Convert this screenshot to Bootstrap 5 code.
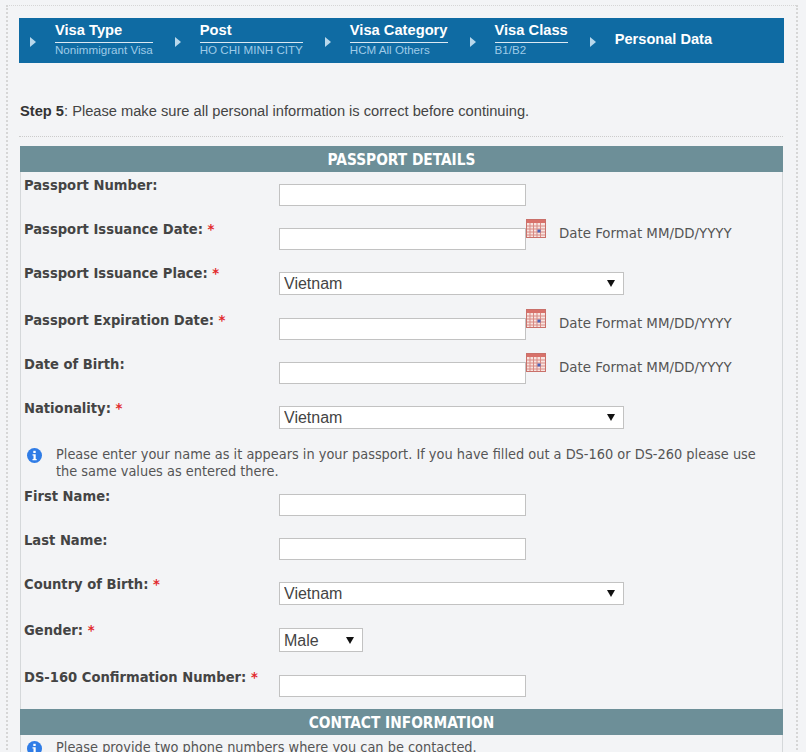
<!DOCTYPE html>
<html lang="en">
<head>
    <meta charset="UTF-8">
    <meta name="viewport" content="width=device-width, initial-scale=1.0">
    <title>Personal Data</title>
    <link href="https://cdn.jsdelivr.net/npm/bootstrap@5.3.0/dist/css/bootstrap.min.css" rel="stylesheet">
    <style>
        html, body {
            height: 752px;
            overflow: hidden;
        }
        body {
            background-color: #f3f4f6;
            font-family: "DejaVu Sans Condensed", "DejaVu Sans", sans-serif;
            font-size: 14.4px;
            color: #555;
        }

        /* frame */
        .page-frame {
            margin: 5px 8px 0 6px;
            padding: 12px 0 0 11px;
            border-top: 1px dotted #d6d6d6;
            border-left: 2px dotted #d6d6d6;
            border-right: 2px dotted #d6d6d6;
            height: 800px;
        }

        /* steps */
        .step-bar {
            width: 765px;
            height: 45px;
            background-color: #0f6ba3;
            font-family: "Liberation Sans", sans-serif;
            padding-left: 11px;
        }
        .step-arrow {
            width: 0;
            height: 0;
            border-top: 5.5px solid transparent;
            border-bottom: 5.5px solid transparent;
            border-left: 6px solid #b9d8ec;
            margin: 2px 19px 0 0;
        }
        .step-item {
            margin-right: 22px;
            padding-bottom: 4px;
        }
        .step-title {
            color: #fff;
            font-size: 14.7px;
            font-weight: 700;
            line-height: 17px;
            border-bottom: 1px solid #dbe9f3;
            padding-bottom: 3px;
        }
        .step-sub {
            color: #9fcbe8;
            font-size: 11.6px;
            line-height: 13px;
        }
        .step-now {
            color: #fff;
            font-size: 14.6px;
            font-weight: 700;
            margin-bottom: 2px;
        }

        .step-note {
            font-family: "Liberation Sans", sans-serif;
            font-size: 14.66px;
            color: #444;
            margin: 39px 0 16px 1px;
            line-height: 18px;
        }
        .step-note b {
            color: #333;
        }

        /* form panel */
        .form-panel {
            width: 764px;
            border-top: 1px dotted #ccc;
            padding-top: 9px;
        }
        .form-body {
            width: 763px;
            margin-left: 1px;
            border-left: 1px solid #d5d8da;
            border-right: 1px solid #d5d8da;
        }
        .panel-head {
            height: 26px;
            line-height: 28px;
            background-color: #6d8f98;
            color: #fff;
            font-size: 15.3px;
            font-weight: 700;
            text-align: center;
            margin: 0 -1px;
        }
        .field-row {
            height: 44px;
            padding-left: 3px;
        }
        .field-row.tall {
            height: 46px;
        }
        .field-row.tallest {
            height: 47px;
        }
        .field-label {
            width: 255px;
            flex: none;
            font-size: 14.6px;
            font-weight: 700;
            color: #444;
            line-height: 18px;
            padding-top: 5px;
        }
        .field-row.snug .field-label {
            padding-top: 4px;
        }
        .req {
            color: #e2292c;
        }
        .form-control.field-input, .form-select.field-input {
            height: 22px;
            min-height: 0;
            width: 247px;
            flex: none;
            padding: 0 5px;
            margin-top: 12px;
            border: 1px solid #c2c2c2;
            border-radius: 0;
            background-color: #fff;
            font-family: "Liberation Sans", sans-serif;
            font-size: 16px;
            color: #444;
            line-height: 21px;
        }
        .form-select.field-input {
            height: 23px;
            width: 345px;
            padding-left: 4px;
            background-image: url("data:image/svg+xml,%3csvg xmlns='http://www.w3.org/2000/svg' viewBox='0 0 8 7'%3e%3cpath d='M0 0h8L4 7z' fill='%23111'/%3e%3c/svg%3e");
            background-size: 8px 7px;
            background-position: right 8px center;
        }
        .form-select.field-input.short {
            width: 84px;
            height: 24px;
        }
        .cal-icon {
            width: 20px;
            height: 19px;
            flex: none;
            margin-top: 3px;
        }
        .date-hint {
            font-size: 14.85px;
            margin-left: 13px;
            margin-top: 8px;
            line-height: 18px;
        }
        .info-row {
            padding: 0 20px 0 6px;
            line-height: 17px;
        }
        .info-first {
            margin: 8px 0 2px;
        }
        .info-next {
            margin-top: 4px;
        }
        .info-icon {
            width: 15px;
            height: 15px;
            flex: none;
            margin: 2px 14px 0 0;
        }
    </style>
</head>
<body>

    <div class="page-frame">
        <div class="step-bar d-flex align-items-center">
            <span class="step-arrow"></span>
            <div class="step-item">
                <div class="step-title">Visa Type</div>
                <div class="step-sub">Nonimmigrant Visa</div>
            </div>
            <span class="step-arrow"></span>
            <div class="step-item">
                <div class="step-title">Post</div>
                <div class="step-sub">HO CHI MINH CITY</div>
            </div>
            <span class="step-arrow"></span>
            <div class="step-item">
                <div class="step-title">Visa Category</div>
                <div class="step-sub">HCM All Others</div>
            </div>
            <span class="step-arrow"></span>
            <div class="step-item">
                <div class="step-title">Visa Class</div>
                <div class="step-sub">B1/B2</div>
            </div>
            <span class="step-arrow"></span>
            <div class="step-now">Personal Data</div>
        </div>

        <p class="step-note"><b>Step 5</b>: Please make sure all personal information is correct before continuing.</p>

        <div class="form-panel">
            <div class="form-body">
                <div class="panel-head">PASSPORT DETAILS</div>

                <div class="field-row snug d-flex">
                    <label class="field-label">Passport Number:</label>
                    <input class="form-control field-input" type="text">
                </div>
                <div class="field-row snug d-flex">
                    <label class="field-label">Passport Issuance Date: <span class="req">*</span></label>
                    <input class="form-control field-input" type="text">
                    <svg class="cal-icon" viewBox="0 0 20 19"><use href="#cal"></use></svg>
                    <span class="date-hint">Date Format MM/DD/YYYY</span>
                </div>
                <div class="field-row snug tall d-flex">
                    <label class="field-label">Passport Issuance Place: <span class="req">*</span></label>
                    <select class="form-select field-input"><option>Vietnam</option></select>
                </div>
                <div class="field-row d-flex">
                    <label class="field-label">Passport Expiration Date: <span class="req">*</span></label>
                    <input class="form-control field-input" type="text">
                    <svg class="cal-icon" viewBox="0 0 20 19"><use href="#cal"></use></svg>
                    <span class="date-hint">Date Format MM/DD/YYYY</span>
                </div>
                <div class="field-row d-flex">
                    <label class="field-label">Date of Birth:</label>
                    <input class="form-control field-input" type="text">
                    <svg class="cal-icon" viewBox="0 0 20 19"><use href="#cal"></use></svg>
                    <span class="date-hint">Date Format MM/DD/YYYY</span>
                </div>
                <div class="field-row d-flex">
                    <label class="field-label">Nationality: <span class="req">*</span></label>
                    <select class="form-select field-input"><option>Vietnam</option></select>
                </div>

                <div class="info-row info-first d-flex">
                    <svg class="info-icon" viewBox="0 0 15 15"><use href="#info"></use></svg>
                    <div>Please enter your name as it appears in your passport. If you have filled out a DS-160 or DS-260 please use the same values as entered there.</div>
                </div>

                <div class="field-row d-flex">
                    <label class="field-label">First Name:</label>
                    <input class="form-control field-input" type="text">
                </div>
                <div class="field-row d-flex">
                    <label class="field-label">Last Name:</label>
                    <input class="form-control field-input" type="text">
                </div>
                <div class="field-row tall d-flex">
                    <label class="field-label">Country of Birth: <span class="req">*</span></label>
                    <select class="form-select field-input"><option>Vietnam</option></select>
                </div>
                <div class="field-row tallest d-flex">
                    <label class="field-label">Gender: <span class="req">*</span></label>
                    <select class="form-select field-input short"><option>Male</option></select>
                </div>
                <div class="field-row tall d-flex">
                    <label class="field-label">DS-160 Confirmation Number: <span class="req">*</span></label>
                    <input class="form-control field-input" type="text">
                </div>

                <div class="panel-head">CONTACT INFORMATION</div>
                <div class="info-row info-next d-flex">
                    <svg class="info-icon" viewBox="0 0 15 15"><use href="#info"></use></svg>
                    <div>Please provide two phone numbers where you can be contacted.</div>
                </div>
            </div>
        </div>
    </div>

    <svg width="0" height="0" class="d-none">
        <symbol id="cal" viewBox="0 0 20 19">
            <rect x="0.5" y="0.5" width="19" height="18" fill="#f7e4e0" stroke="#c9706a"/>
            <rect x="1" y="1" width="18" height="3" fill="#d8716a"/>
            <path d="M1 7h18M1 10h18M1 13h18M1 16h18M4 4v14M7.500 4v14M11 4v14M14.500 4v14" stroke="#d98a84" stroke-width="1" fill="none"/>
            <rect x="11.500" y="10.500" width="3" height="3" fill="#4a62b8"/>
        </symbol>
        <symbol id="info" viewBox="0 0 15 15">
            <circle cx="7.500" cy="7.500" r="7.500" fill="#2f7ce6"/>
            <rect x="6.300" y="2.800" width="2.400" height="2.200" fill="#fff"/>
            <path d="M5.500 6.200h3.200v4.800h1v1.200h-4.200v-1.200h1v-3.600h-1z" fill="#fff"/>
        </symbol>
    </svg>

    <script src="https://cdn.jsdelivr.net/npm/bootstrap@5.3.0/dist/js/bootstrap.bundle.min.js"></script>
</body>
</html>
